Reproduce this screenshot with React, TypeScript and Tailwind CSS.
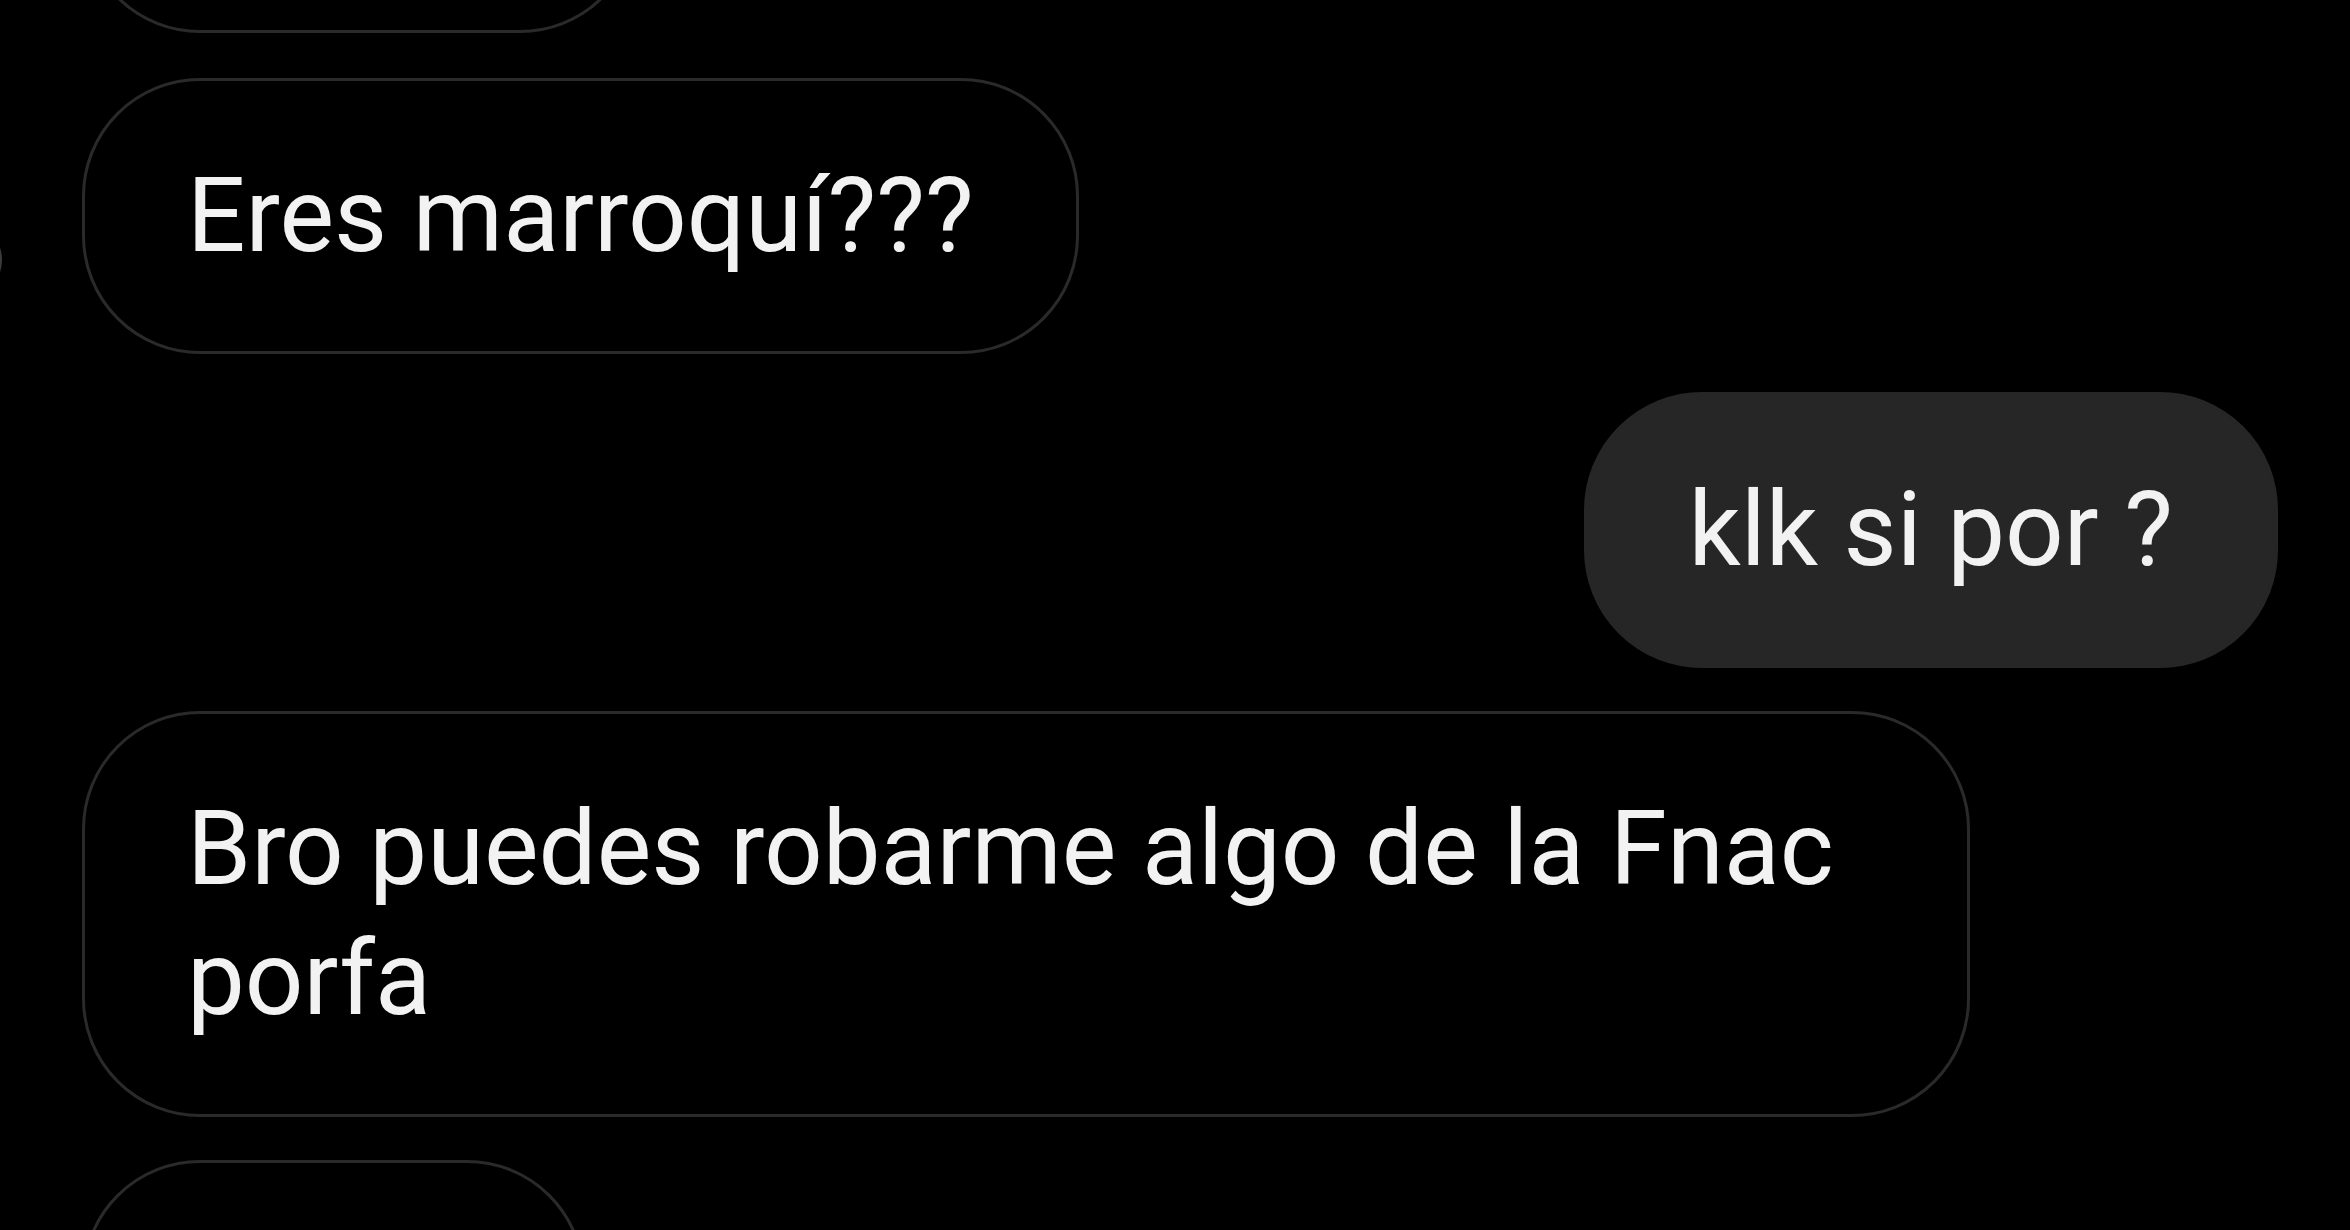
import React from "react";

const bubbleOther =
  "rounded-[118px] border-[3px] border-[#2a2a2a] bg-black px-[102px] py-[70px] text-[103px] leading-[130px] text-[#f2f2f2]";
const bubbleMine =
  "rounded-[118px] border-[3px] border-[#262626] bg-[#262626] px-[102px] py-[70px] text-[103px] leading-[130px] text-[#f2f2f2]";

export default function App() {
  return (
    <div
      className="h-[1230px] w-[2350px] overflow-hidden bg-black"
      style={{ fontFamily: "Roboto, 'Liberation Sans', sans-serif" }}
    >
      <div className="-mt-[244px] flex flex-col items-start pl-[82px] pr-[72px]">
        {/* partially visible bubble at top */}
        <div className="h-[277px] w-[556px] rounded-[118px] border-[3px] border-[#2a2a2a]" />

        {/* Eres marroquí??? */}
        <div className="relative mt-[45px]">
          <div className="absolute left-[-160px] top-[142px] h-[80px] w-[80px] rounded-full bg-[#3c3c3c]" />
          <div className={bubbleOther}>Eres marroquí???</div>
        </div>

        {/* my message */}
        <div className="mt-[38px] flex w-full justify-end">
          <div className={bubbleMine}>klk si por ?</div>
        </div>

        {/* two-line message */}
        <div className={`mt-[43px] max-w-[1888px] ${bubbleOther}`}>
          Bro puedes robarme algo de la Fnac porfa
        </div>

        {/* partially visible bubble at bottom */}
        <div className="mt-[43px] h-[277px] w-[503px] rounded-[118px] border-[3px] border-[#2a2a2a]" />
      </div>
    </div>
  );
}
